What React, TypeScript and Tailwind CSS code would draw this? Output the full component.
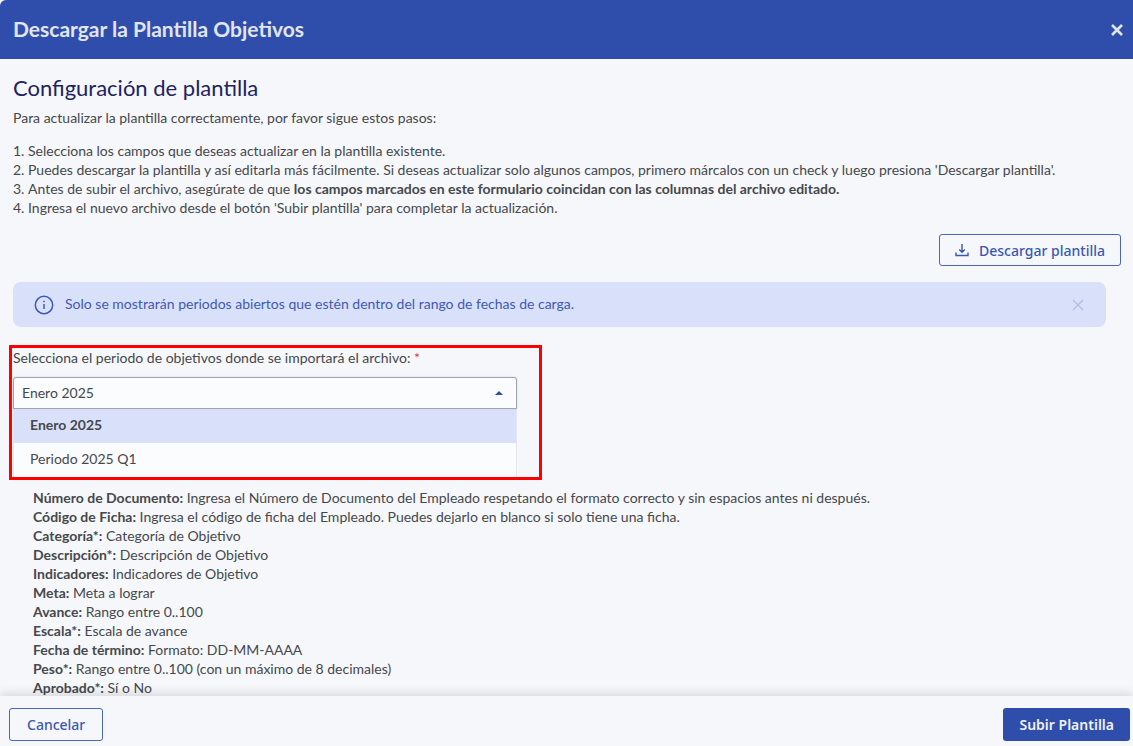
import { useState } from "react";

const periods = ["Enero 2025", "Periodo 2025 Q1"];

const fields = [
  { name: "Número de Documento:", text: "Ingresa el Número de Documento del Empleado respetando el formato correcto y sin espacios antes ni después." },
  { name: "Código de Ficha:", text: "Ingresa el código de ficha del Empleado. Puedes dejarlo en blanco si solo tiene una ficha." },
  { name: "Categoría*:", text: "Categoría de Objetivo" },
  { name: "Descripción*:", text: "Descripción de Objetivo" },
  { name: "Indicadores:", text: "Indicadores de Objetivo" },
  { name: "Meta:", text: "Meta a lograr" },
  { name: "Avance:", text: "Rango entre 0..100" },
  { name: "Escala*:", text: "Escala de avance" },
  { name: "Fecha de término:", text: "Formato: DD-MM-AAAA" },
  { name: "Peso*:", text: "Rango entre 0..100 (con un máximo de 8 decimales)" },
  { name: "Aprobado*:", text: "Sí o No" },
];

function Header() {
  return (
    <header className="flex h-[59px] shrink-0 items-center justify-between rounded-tl-md bg-[#2f4eac] pr-2 pb-0.5 pl-[13px] text-[#e2e5ed]">
      <h1 className="text-[21px] font-bold">Descargar la Plantilla Objetivos</h1>
      <button type="button" aria-label="Cerrar" className="mt-0.5 p-0.5">
        <svg viewBox="0 0 12 12" className="size-3" fill="none" stroke="currentColor" strokeWidth="2.6">
          <path d="M1 1l10 10M11 1L1 11" />
        </svg>
      </button>
    </header>
  );
}

function Notice() {
  return (
    <div className="mt-4 mr-[15px] flex h-[45px] items-center rounded-lg bg-[#d9e1fa] pr-5 pl-5 text-[#4059b5]">
      <svg viewBox="0 0 22 22" className="size-[22px]" fill="none" stroke="currentColor" strokeWidth="1.5">
        <circle cx="11" cy="11" r="8.7" />
        <path d="M11 10v5" />
        <path d="M11 6.8v1.5" />
      </svg>
      <p className="ml-2.5 flex-1 pb-0.5 text-[14px]">
        Solo se mostrarán periodos abiertos que estén dentro del rango de fechas de carga.
      </p>
      <button type="button" aria-label="Descartar aviso" className="p-0.5 text-[#afbeea]">
        <svg viewBox="0 0 12 12" className="size-3" fill="none" stroke="currentColor" strokeWidth="1.3">
          <path d="M1 1l10 10M11 1L1 11" />
        </svg>
      </button>
    </div>
  );
}

function PeriodPicker() {
  const [period, setPeriod] = useState(periods[0]);
  return (
    <section className="mt-[18px] -ml-1 w-[533px] max-w-full border-3 border-[#ff0000] pr-[22px] pl-px">
      <label htmlFor="period" className="block text-[14px] leading-5">
        Selecciona el periodo de objetivos donde se importará el archivo:{" "}
        <span className="text-[#e5343d]">*</span>
      </label>
      <div className="relative mt-[9px]">
        <select
          id="period"
          value={period}
          onChange={(e) => setPeriod(e.target.value)}
          className="block h-8 w-full appearance-none rounded-t-[3px] border border-[#a3a5ac] bg-[#fbfcfe] px-2 pb-0.5 text-[14px] shadow-[0_0_2px_#c5cbe0]"
        >
          {periods.map((p) => (
            <option key={p}>{p}</option>
          ))}
        </select>
        <svg viewBox="0 0 8 4" className="pointer-events-none absolute top-3.5 right-3.5 h-1 w-2" fill="#2f4eac">
          <path d="M4 0l4 4H0z" />
        </svg>
      </div>
      <ul role="listbox" aria-label="Periodos" className="border-x border-[#e4e6ec] bg-[#fbfcfe] text-[14px]">
        {periods.map((p) => (
          <li key={p} role="option" aria-selected={p === period}>
            <button
              type="button"
              onClick={() => setPeriod(p)}
              className={
                p === period
                  ? "block h-[34px] w-full bg-[#d9e1fa] px-4 pb-1 text-left font-bold"
                  : "block h-[34px] w-full px-4 pb-1 text-left"
              }
            >
              {p}
            </button>
          </li>
        ))}
      </ul>
    </section>
  );
}

export default function App() {
  return (
    <div className="flex h-screen flex-col bg-[#f5f7fa] font-['Lato','Noto_Sans',sans-serif] text-[#46484d]">
      <Header />
      <main className="min-h-0 flex-1 overflow-hidden pr-3 pl-[13px]">
        <h2 className="mt-3.5 text-[22px] leading-[30px] text-[#1d2363]">Configuración de plantilla</h2>
        <p className="mt-[5px] text-[14px] leading-[19px]">
          Para actualizar la plantilla correctamente, por favor sigue estos pasos:
        </p>
        <ol className="mt-3.5 list-inside list-decimal text-[14px] leading-[19px]">
          <li>Selecciona los campos que deseas actualizar en la plantilla existente.</li>
          <li>
            Puedes descargar la plantilla y así editarla más fácilmente. Si deseas actualizar solo algunos campos,
            primero márcalos con un check y luego presiona 'Descargar plantilla'.
          </li>
          <li>
            Antes de subir el archivo, asegúrate de que{" "}
            <strong>los campos marcados en este formulario coincidan con las columnas del archivo editado.</strong>
          </li>
          <li>Ingresa el nuevo archivo desde el botón 'Subir plantilla' para completar la actualización.</li>
        </ol>
        <div className="mt-[17px] flex justify-end">
          <button
            type="button"
            className="flex h-8 items-center gap-2.5 rounded-[3px] border border-[#4a66bd] px-[15px] font-['Noto_Sans',sans-serif] text-[14px] font-medium text-[#3b57b3]"
          >
            <svg viewBox="0 0 14 14" className="size-3.5" fill="none" stroke="currentColor" strokeWidth="1.4">
              <path d="M7 1v8M4.2 6.5L7 9.2l2.8-2.7M1 9.5v3h12v-3" />
            </svg>
            Descargar plantilla
          </button>
        </div>
        <Notice />
        <PeriodPicker />
        <ul className="mt-2 ml-5 text-[14px] leading-[19px]">
          {fields.map((f) => (
            <li key={f.name}>
              <strong>{f.name}</strong> {f.text}
            </li>
          ))}
        </ul>
      </main>
      <footer className="relative flex h-[50px] shrink-0 items-center justify-between bg-[#f5f7fa] pt-1.5 pr-[3px] pl-[9px] font-['Noto_Sans',sans-serif] text-[14px] shadow-[0_-2px_10px_rgba(0,0,0,0.14)]">
        <button type="button" className="h-[33px] rounded-[3px] border border-[#4a66bd] px-[17px] font-medium text-[#3b57b3]">
          Cancelar
        </button>
        <button type="button" className="h-[33px] rounded-[3px] bg-[#2f4eac] px-4 font-semibold text-[#eef1fa]">
          Subir Plantilla
        </button>
      </footer>
    </div>
  );
}
